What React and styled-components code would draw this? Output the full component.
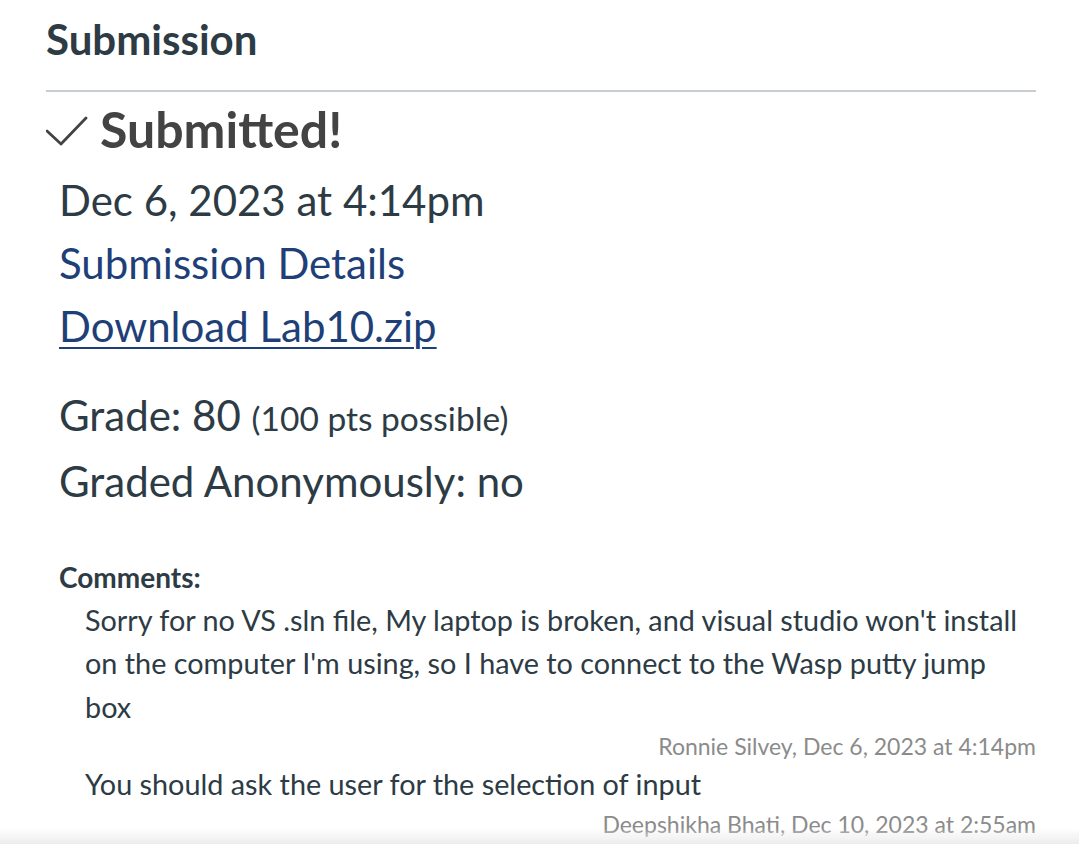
import React from 'react';
import styled, { createGlobalStyle } from 'styled-components';

const GlobalStyle = createGlobalStyle`
  html, body {
    margin: 0;
    padding: 0;
    background: #ffffff;
  }
  body {
    font-family: Lato, "Open Sans", sans-serif;
    color: #2d3b45;
  }
`;

const Page = styled.div`
  padding: 15px 43px 40px 46px;
`;

const Heading = styled.h2`
  margin: 0;
  font-size: 42px;
  line-height: 48px;
  font-weight: 700;
  color: #2d3b45;
`;

const Rule = styled.hr`
  margin: 27px 0 0;
  border: none;
  height: 2px;
  background: #c7cdd1;
`;

const Status = styled.div`
  display: flex;
  align-items: center;
  gap: 8px;
  margin-top: 7px;
  font-size: 50px;
  line-height: 60px;
  font-weight: 700;
  color: #434343;
`;

const Details = styled.div`
  padding-left: 13px;
  margin-top: 10px;
`;

const Line = styled.div`
  font-size: 42px;
  line-height: 63px;
  color: #2d3b45;
  margin-top: ${p => p.$gap || 0}px;
`;

const LinkText = styled.a`
  font-size: 42px;
  line-height: 63px;
  color: #1f3f78;
  display: block;
  width: max-content;
  text-decoration: ${p => (p.$underline ? 'underline' : 'none')};
  text-decoration-thickness: 2px;
  text-underline-offset: 5px;
`;

const Small = styled.span`
  font-size: 33.5px;
`;

const CommentsLabel = styled.div`
  margin-top: 47px;
  font-size: 28px;
  line-height: 34px;
  font-weight: 700;
  color: #2d3b45;
`;

const CommentList = styled.div`
  margin-top: 5px;
  padding-left: 26px;
`;

const Comment = styled.div`
  margin-top: ${p => (p.$first ? 0 : 2)}px;
`;

const CommentText = styled.div`
  font-size: 28.8px;
  line-height: 43.4px;
  color: #2d3b45;
`;

const Author = styled.div`
  text-align: right;
  font-size: 23px;
  line-height: 30px;
  color: #8b8b8b;
  margin-top: 2px;
`;

const BottomFade = styled.div`
  position: fixed;
  left: 0;
  right: 0;
  bottom: 0;
  height: 16px;
  background: linear-gradient(to bottom, rgba(236, 236, 236, 0), #ececec);
  pointer-events: none;
`;

const CheckIcon = () => (
  <svg width="46" height="40" viewBox="0 0 46 40" fill="none">
    <polyline
      points="1,22 15,35 40,9"
      stroke="#434343"
      strokeWidth="2.8"
      strokeLinecap="round"
      strokeLinejoin="round"
    />
  </svg>
);

const comments = [
  {
    text: "Sorry for no VS .sln file, My laptop is broken, and visual studio won't install on the computer I'm using, so I have to connect to the Wasp putty jump box",
    author: 'Ronnie Silvey, Dec 6, 2023 at 4:14pm',
  },
  {
    text: 'You should ask the user for the selection of input',
    author: 'Deepshikha Bhati, Dec 10, 2023 at 2:55am',
  },
];

export default function App() {
  return (
    <>
      <GlobalStyle />
      <Page>
        <Heading>Submission</Heading>
        <Rule />
        <Status>
          <CheckIcon />
          Submitted!
        </Status>
        <Details>
          <Line>Dec 6, 2023 at 4:14pm</Line>
          <LinkText href="#">Submission Details</LinkText>
          <LinkText href="#" $underline>Download Lab10.zip</LinkText>
          <Line $gap={26}>
            Grade: 80 <Small>(100 pts possible)</Small>
          </Line>
          <Line>Graded Anonymously: no</Line>
          <CommentsLabel>Comments:</CommentsLabel>
          <CommentList>
            {comments.map((c, i) => (
              <Comment key={i} $first={i === 0}>
                <CommentText>{c.text}</CommentText>
                <Author>{c.author}</Author>
              </Comment>
            ))}
          </CommentList>
        </Details>
      </Page>
      <BottomFade />
    </>
  );
}
